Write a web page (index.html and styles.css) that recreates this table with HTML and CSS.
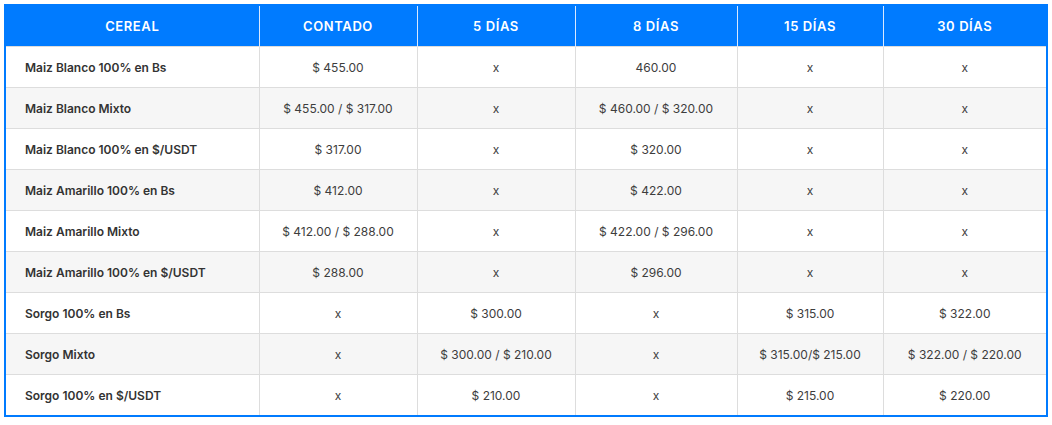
FILE: index.html
```html
<!DOCTYPE html>
<html lang="es">
<head>
<meta charset="utf-8">
<link rel="stylesheet" href="styles.css">
</head>
<body>
<div class="wrap">
<table class="prices">
  <colgroup>
    <col class="c1"><col class="c2"><col class="c3"><col class="c4"><col class="c5"><col class="c6">
  </colgroup>
  <thead>
    <tr><th>Cereal</th><th>Contado</th><th>5 Días</th><th>8 Días</th><th>15 Días</th><th>30 Días</th></tr>
  </thead>
  <tbody>
    <tr><td>Maiz Blanco 100% en Bs</td><td>$ 455.00</td><td>x</td><td>460.00</td><td>x</td><td>x</td></tr>
    <tr><td>Maiz Blanco Mixto</td><td>$ 455.00 / $ 317.00</td><td>x</td><td>$ 460.00 / $ 320.00</td><td>x</td><td>x</td></tr>
    <tr><td>Maiz Blanco 100% en $/USDT</td><td>$ 317.00</td><td>x</td><td>$ 320.00</td><td>x</td><td>x</td></tr>
    <tr><td>Maiz Amarillo 100% en Bs</td><td>$ 412.00</td><td>x</td><td>$ 422.00</td><td>x</td><td>x</td></tr>
    <tr><td>Maiz Amarillo Mixto</td><td>$ 412.00 / $ 288.00</td><td>x</td><td>$ 422.00 / $ 296.00</td><td>x</td><td>x</td></tr>
    <tr><td>Maiz Amarillo 100% en $/USDT</td><td>$ 288.00</td><td>x</td><td>$ 296.00</td><td>x</td><td>x</td></tr>
    <tr><td>Sorgo 100% en Bs</td><td>x</td><td>$ 300.00</td><td>x</td><td>$ 315.00</td><td>$ 322.00</td></tr>
    <tr><td>Sorgo Mixto</td><td>x</td><td>$ 300.00 / $ 210.00</td><td>x</td><td>$ 315.00/$ 215.00</td><td>$ 322.00 / $ 220.00</td></tr>
    <tr><td>Sorgo 100% en $/USDT</td><td>x</td><td>$ 210.00</td><td>x</td><td>$ 215.00</td><td>$ 220.00</td></tr>
  </tbody>
</table>
</div>
</body>
</html>
```
FILE: styles.css
```css
html, body {
  margin: 0;
  padding: 0;
  background: #ffffff;
}
.wrap {
  padding: 4px;
}
.prices {
  width: 1042px;
  border-collapse: collapse;
  border: 2px solid #007bff;
  font-family: Inter, "Noto Sans", sans-serif;
  font-size: 12px;
  color: #333333;
  table-layout: fixed;
}
.c1 { width: 254px; }
.c2 { width: 158px; }
.c3 { width: 158px; }
.c4 { width: 162px; }
.c5 { width: 146px; }
.c6 { width: 164px; }
.prices th {
  background: #007bff;
  color: #ffffff;
  font-weight: 600;
  font-size: 13px;
  text-transform: uppercase;
  letter-spacing: 0.6px;
  height: 40px;
  padding: 0;
  border-left: 1px solid #d9e8ff;
  text-align: center;
}
.prices th:first-child {
  border-left: none;
}
.prices td {
  height: 40px;
  padding: 0;
  text-align: center;
  border: 1px solid #dddddd;
  color: #3d3d3d;
}
.prices td:first-child {
  text-align: left;
  padding-left: 19px;
  font-weight: 600;
  color: #333333;
}
.prices tbody tr:nth-child(even) td {
  background: #f6f6f6;
}
```
